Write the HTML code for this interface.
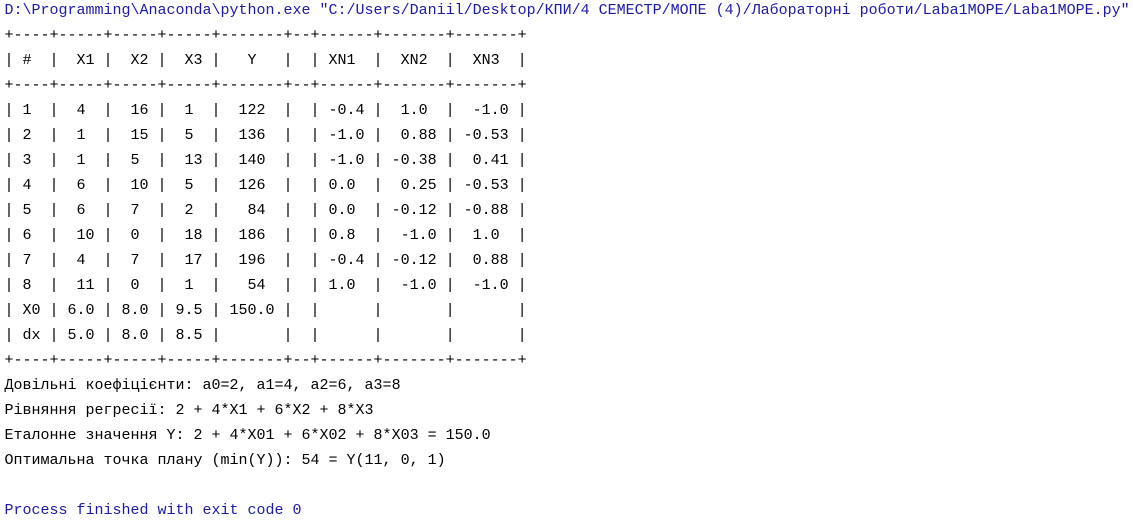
<!DOCTYPE html>
<html><head><meta charset="utf-8">
<style>
html,body{margin:0;padding:0;background:#fff;width:1133px;height:522px;overflow:hidden;}
pre{margin:0;position:absolute;left:4.5px;top:-2px;font-family:"Liberation Mono","DejaVu Sans Mono",monospace;font-size:15px;line-height:25px;color:#000;white-space:pre;}
.b{color:#1a1aa6;}
</style></head><body>
<pre><span class="b">D:\Programming\Anaconda\python.exe "C:/Users/Daniil/Desktop/КПИ/4 СЕМЕСТР/МОПЕ (4)/Лабораторні роботи/Laba1MOPE/Laba1MOPE.py"</span>
+----+-----+-----+-----+-------+--+------+-------+-------+
| #  |  X1 |  X2 |  X3 |   Y   |  | XN1  |  XN2  |  XN3  |
+----+-----+-----+-----+-------+--+------+-------+-------+
| 1  |  4  |  16 |  1  |  122  |  | -0.4 |  1.0  |  -1.0 |
| 2  |  1  |  15 |  5  |  136  |  | -1.0 |  0.88 | -0.53 |
| 3  |  1  |  5  |  13 |  140  |  | -1.0 | -0.38 |  0.41 |
| 4  |  6  |  10 |  5  |  126  |  | 0.0  |  0.25 | -0.53 |
| 5  |  6  |  7  |  2  |   84  |  | 0.0  | -0.12 | -0.88 |
| 6  |  10 |  0  |  18 |  186  |  | 0.8  |  -1.0 |  1.0  |
| 7  |  4  |  7  |  17 |  196  |  | -0.4 | -0.12 |  0.88 |
| 8  |  11 |  0  |  1  |   54  |  | 1.0  |  -1.0 |  -1.0 |
| X0 | 6.0 | 8.0 | 9.5 | 150.0 |  |      |       |       |
| dx | 5.0 | 8.0 | 8.5 |       |  |      |       |       |
+----+-----+-----+-----+-------+--+------+-------+-------+
Довільні коефіцієнти: a0=2, a1=4, a2=6, a3=8
Рівняння регресії: 2 + 4*X1 + 6*X2 + 8*X3
Еталонне значення Y: 2 + 4*X01 + 6*X02 + 8*X03 = 150.0
Оптимальна точка плану (min(Y)): 54 = Y(11, 0, 1)

<span class="b">Process finished with exit code 0</span></pre>
</body></html>
